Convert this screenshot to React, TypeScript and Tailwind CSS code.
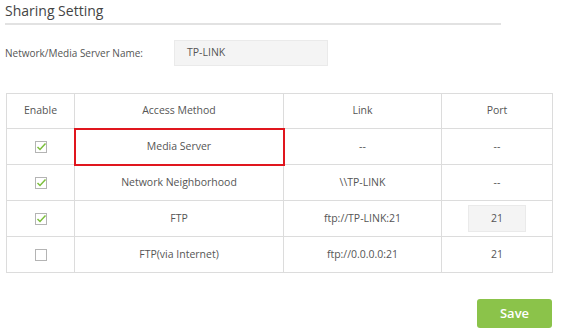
import React from 'react'

type Row = {
  enabled: boolean
  method: string
  link: string
  port: string
  portInput?: boolean
  highlight?: boolean
}

const rows: Row[] = [
  { enabled: true, method: 'Media Server', link: '--', port: '--', highlight: true },
  { enabled: true, method: 'Network Neighborhood', link: '\\\\TP-LINK', port: '--' },
  { enabled: true, method: 'FTP', link: 'ftp://TP-LINK:21', port: '21', portInput: true },
  { enabled: false, method: 'FTP(via Internet)', link: 'ftp://0.0.0.0:21', port: '21' }
]

const CheckBox = ({ checked }: { checked: boolean }) => (
  <svg width="12" height="12" viewBox="0 0 12 12" className="inline-block">
    <rect x="0.5" y="0.5" width="11" height="11" fill="#fff" stroke="#b4b4b4" />
    {checked && (
      <path d="M2.5 6 L5 8.5 L10.5 2.5" fill="none" stroke="#7cbf3c" strokeWidth="1.5" />
    )}
  </svg>
)

const App: React.FC = () => {
  return (
    <div className="w-[576px] h-[328px] bg-white text-[#555] font-['Open_Sans','DejaVu_Sans',sans-serif] relative">
      <div className="pl-[5px] pt-[1px]">
        <h2 className="text-[14px] leading-[20px] text-[#444]">Sharing Setting</h2>
        <div className="mt-[2px] w-[496px] h-[2px] bg-[#e2e2e2]" />
      </div>

      <div className="flex items-center mt-[15px] pl-[5px]">
        <span className="text-[10px] w-[169px]">Network/Media Server Name:</span>
        <div className="w-[154px] h-[26px] bg-[#f4f4f4] border border-[#eaeaea] text-[10.5px] pl-[12px] flex items-center">
          TP-LINK
        </div>
      </div>

      <table className="ml-[6px] mt-[27px] border-collapse text-[10.5px] text-center">
        <thead>
          <tr className="h-[35px]">
            <th className="w-[68px] border border-[#dcdcdc] font-normal">Enable</th>
            <th className="w-[209px] border border-[#dcdcdc] font-normal">Access Method</th>
            <th className="w-[158px] border border-[#dcdcdc] font-normal">Link</th>
            <th className="w-[111px] border border-[#dcdcdc] font-normal">Port</th>
          </tr>
        </thead>
        <tbody>
          {rows.map((r) => (
            <tr key={r.method} className="h-[36px]">
              <td className="border border-[#dcdcdc]">
                <div className="flex justify-center">
                  <CheckBox checked={r.enabled} />
                </div>
              </td>
              <td
                className={
                  r.highlight
                    ? 'border border-[#dcdcdc] outline-2 outline-[#e0161e] -outline-offset-1'
                    : 'border border-[#dcdcdc]'
                }
              >
                {r.method}
              </td>
              <td className="border border-[#dcdcdc]">{r.link}</td>
              <td className="border border-[#dcdcdc]">
                {r.portInput ? (
                  <div className="mx-auto w-[58px] h-[27px] bg-[#f4f4f4] border border-[#eaeaea] flex items-center justify-center">
                    {r.port}
                  </div>
                ) : (
                  r.port
                )}
              </td>
            </tr>
          ))}
        </tbody>
      </table>

      <div className="flex justify-end w-[552px] mt-[26px]">
        <button className="w-[75px] h-[29px] bg-[#8bc34a] rounded-[3px] text-white text-[13px] font-semibold">
          Save
        </button>
      </div>
    </div>
  )
}

export default App
